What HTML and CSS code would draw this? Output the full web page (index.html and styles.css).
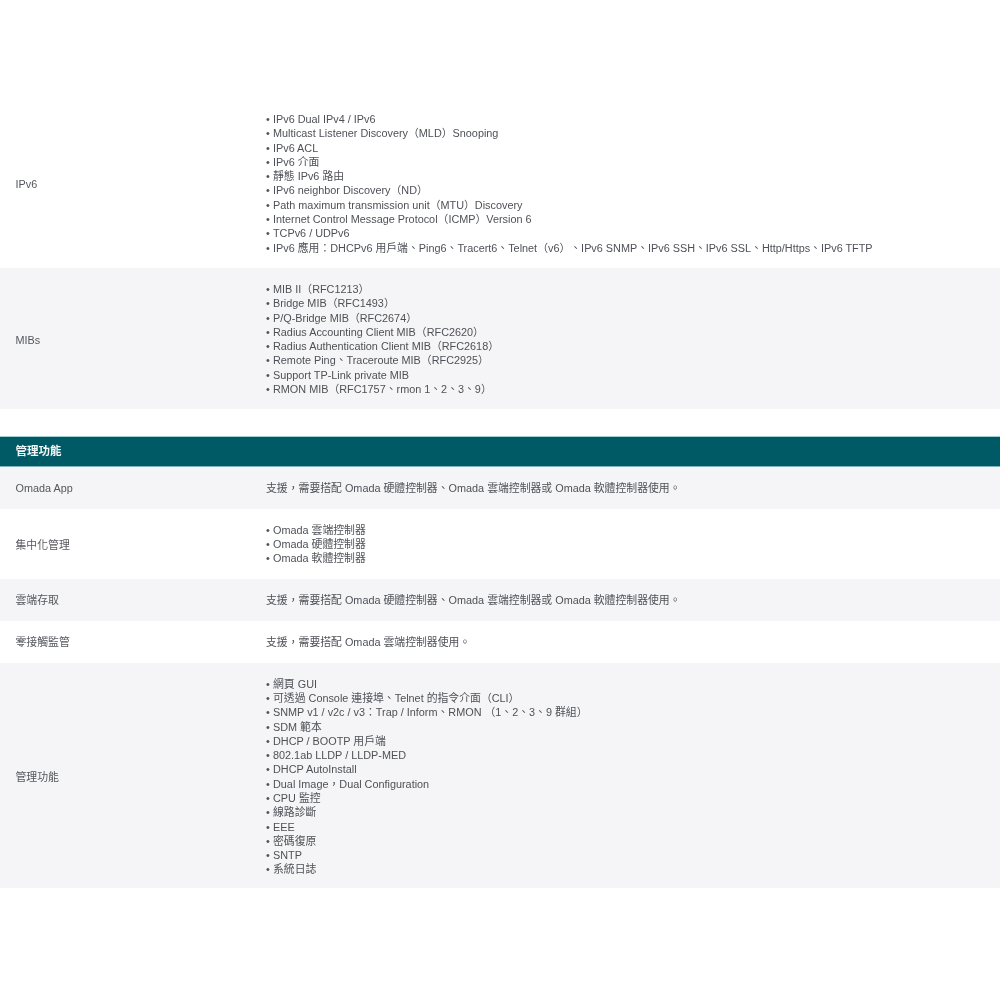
FILE: index.html
```html
<!DOCTYPE html>
<html lang="zh-Hant">
<head>
<meta charset="utf-8">
<title>管理功能</title>
<link rel="stylesheet" href="styles.css">
</head>
<body>
<main class="spec">
  <section class="row tall">
    <div class="label">IPv6</div>
    <ul class="value">
      <li>IPv6 Dual IPv4 / IPv6</li>
      <li>Multicast Listener Discovery（MLD）Snooping</li>
      <li>IPv6 ACL</li>
      <li>IPv6 介面</li>
      <li>靜態 IPv6 路由</li>
      <li>IPv6 neighbor Discovery（ND）</li>
      <li>Path maximum transmission unit（MTU）Discovery</li>
      <li>Internet Control Message Protocol（ICMP）Version 6</li>
      <li>TCPv6 / UDPv6</li>
      <li>IPv6 應用：DHCPv6 用戶端、Ping6、Tracert6、Telnet（v6）、IPv6 SNMP、IPv6 SSH、IPv6 SSL、Http/Https、IPv6 TFTP</li>
    </ul>
  </section>
  <section class="row alt tall">
    <div class="label">MIBs</div>
    <ul class="value">
      <li>MIB II（RFC1213）</li>
      <li>Bridge MIB（RFC1493）</li>
      <li>P/Q-Bridge MIB（RFC2674）</li>
      <li>Radius Accounting Client MIB（RFC2620）</li>
      <li>Radius Authentication Client MIB（RFC2618）</li>
      <li>Remote Ping、Traceroute MIB（RFC2925）</li>
      <li>Support TP-Link private MIB</li>
      <li>RMON MIB（RFC1757、rmon 1、2、3、9）</li>
    </ul>
  </section>
  <h2 class="band">管理功能</h2>
  <section class="row alt single">
    <div class="label">Omada App</div>
    <p class="value">支援，需要搭配 Omada 硬體控制器、Omada 雲端控制器或 Omada 軟體控制器使用。</p>
  </section>
  <section class="row triple tall">
    <div class="label">集中化管理</div>
    <ul class="value">
      <li>Omada 雲端控制器</li>
      <li>Omada 硬體控制器</li>
      <li>Omada 軟體控制器</li>
    </ul>
  </section>
  <section class="row alt single">
    <div class="label">雲端存取</div>
    <p class="value">支援，需要搭配 Omada 硬體控制器、Omada 雲端控制器或 Omada 軟體控制器使用。</p>
  </section>
  <section class="row single">
    <div class="label">零接觸監管</div>
    <p class="value">支援，需要搭配 Omada 雲端控制器使用。</p>
  </section>
  <section class="row alt last">
    <div class="label">管理功能</div>
    <ul class="value">
      <li>網頁 GUI</li>
      <li>可透過 Console 連接埠、Telnet 的指令介面（CLI）</li>
      <li>SNMP v1 / v2c / v3：Trap / Inform、RMON （1、2、3、9 群組）</li>
      <li>SDM 範本</li>
      <li>DHCP / BOOTP 用戶端</li>
      <li>802.1ab LLDP / LLDP-MED</li>
      <li>DHCP AutoInstall</li>
      <li>Dual Image，Dual Configuration</li>
      <li>CPU 監控</li>
      <li>線路診斷</li>
      <li>EEE</li>
      <li>密碼復原</li>
      <li>SNTP</li>
      <li>系統日誌</li>
    </ul>
  </section>
</main>
</body>
</html>
```
FILE: styles.css
```css
* { box-sizing: border-box; }
html, body { margin: 0; background: #fff; }
body {
  font-family: "Liberation Sans", "Noto Sans CJK TC", sans-serif;
  font-size: 10.85px;
  line-height: 14.3px;
  color: #54575d;
  text-spacing-trim: space-all;
}
.spec { padding-top: 98px; filter: blur(0.4px); }
.row { display: flex; align-items: center; padding: 14px 0 13px; }
.alt { background: #f5f5f7; }
.single { padding: 14px 0 13.3px; }
.triple { padding: 14px 0; }
.last { padding-bottom: 11px; }
.label { width: 250px; padding-left: 15.5px; flex: none; }
.tall .label { padding-top: 2px; }
.value { margin: 0; padding: 0 0 0 16px; list-style: none; color: #4e5157; }
ul.value li { position: relative; padding-left: 7px; }
ul.value li::before { content: "•"; position: absolute; left: 0; }
.band {
  margin: 26.6px 0 0;
  height: 31px;
  padding-left: 15.5px;
  background: #005a66;
  border-top: 1px solid #9fcfd0;
  border-bottom: 1px solid #7fb5b8;
  color: #f2f7f7;
  font-size: 11.5px;
  font-weight: 700;
  line-height: 29px;
}
```
